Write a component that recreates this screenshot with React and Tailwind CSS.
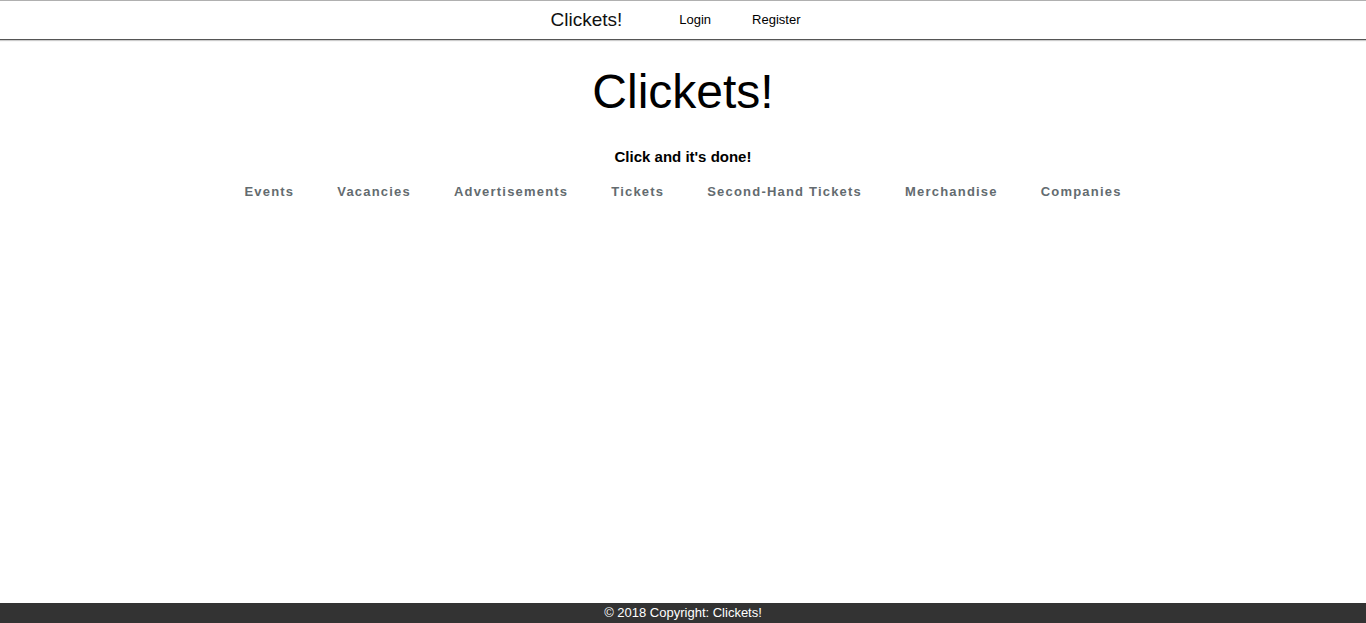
import React from "react";

const links = ["Events", "Vacancies", "Advertisements", "Tickets", "Second-Hand Tickets", "Merchandise", "Companies"];

export default function App() {
  return (
    <div className="min-h-screen flex flex-col bg-white" style={{ fontFamily: "'Liberation Sans', Arial, sans-serif" }}>
      <header className="h-[40px] border-t border-t-[#b0b0b0] border-b border-b-[#555] shadow-[0_1px_1px_rgba(0,0,0,0.2)] flex items-center justify-center pr-[15px]">
        <span className="text-[19px] text-[#111] mr-[57px]">Clickets!</span>
        <a className="text-[13px] text-black mr-[41px]">Login</a>
        <a className="text-[13px] text-black">Register</a>
      </header>
      <main className="flex-1 flex flex-col items-center">
        <h1 className="text-[48px] leading-none text-black mt-[28px]">Clickets!</h1>
        <p className="text-[15px] font-bold text-black mt-[30px]">Click and it's done!</p>
        <nav className="flex mt-[13px]">
          {links.map((l) => (
            <a key={l} className="text-[13px] font-bold text-[#636b6f] tracking-[1.2px] px-[21.5px]">{l}</a>
          ))}
        </nav>
      </main>
      <footer className="h-[20px] bg-[#333] text-white text-[13px] flex items-center justify-center">
        © 2018 Copyright: Clickets!
      </footer>
    </div>
  );
}
